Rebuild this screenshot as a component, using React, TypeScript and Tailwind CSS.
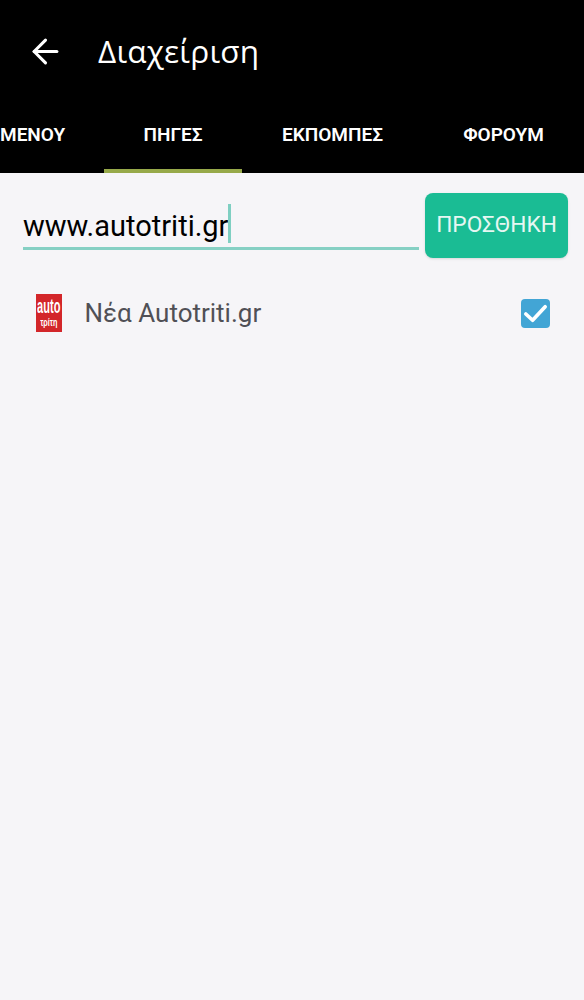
import { ArrowLeft } from "lucide-react";

const roboto = "font-['Roboto','Noto_Sans',sans-serif]";

function Tab({ label, active, className }: { label: string; active?: boolean; className: string }) {
  return (
    <div className={`relative flex h-full items-center pb-[8px] text-[19px] font-semibold leading-none text-white ${className}`}>
      {label}
      {active && <div className="absolute bottom-0 left-0 right-0 h-[4px] bg-[#97a94a]" />}
    </div>
  );
}

function Logo() {
  return (
    <div className="flex h-[38px] w-[26px] flex-col items-center overflow-hidden bg-[#d3262a] font-['Liberation_Sans',sans-serif] font-bold leading-none text-white">
      <span className="mt-[3px] h-[19px] origin-top scale-x-[0.85] scale-y-[1.55] text-[13px] leading-[12px]">auto</span>
      <span className="mt-[2px] h-[11px] origin-top scale-x-[0.8] scale-y-[1.2] text-[9px] leading-[9px]">τρίτη</span>
    </div>
  );
}

export default function App() {
  return (
    <div className={`flex h-[1000px] w-[584px] flex-col overflow-hidden bg-[#f6f5f8] ${roboto}`}>
      <header className="flex h-[104px] items-center bg-black pb-[2px] pl-[26px] text-white">
        <ArrowLeft size={39} strokeWidth={1.9} />
        <h1 className="ml-[33px] font-['Open_Sans',sans-serif] text-[31.5px] font-medium leading-none tracking-[0.2px]">
          Διαχείριση
        </h1>
      </header>
      <nav className="flex h-[69px] bg-black">
        <Tab label="ΜΕΝΟΥ" className="w-[104px]" />
        <Tab label="ΠΗΓΕΣ" active className="w-[138px] justify-center" />
        <Tab label="ΕΚΠΟΜΠΕΣ" className="w-[181px] justify-center" />
        <Tab label="ΦΟΡΟΥΜ" className="w-[161px] justify-center" />
      </nav>
      <div className="flex items-start pl-[23px] pr-[16px] pt-[20px]">
        <div className="relative mr-[6px] flex h-[57px] flex-1 items-center border-b-[3px] border-[#86d0c4] pt-[12px] text-[29px] leading-none text-black">
          <span>www.autotriti.gr</span>
          <span className="ml-[0px] mt-[-6px] h-[39px] w-[3px] bg-[#7fcfc2]" />
        </div>
        <button className="flex h-[65px] w-[143px] items-center justify-center rounded-[8px] bg-[#1abc94] text-[22.7px] leading-none text-[#e6f7f2] shadow-sm">
          ΠΡΟΣΘΗΚΗ
        </button>
      </div>
      <div className="flex items-center pl-[36px] pr-[34px] pt-[36px]">
        <Logo />
        <span className="ml-[22.5px] flex-1 text-[26px] leading-none text-[#505056]">Νέα Autotriti.gr</span>
        <div className="flex h-[29px] w-[29px] items-center justify-center rounded-[4px] bg-[#42a5d5]">
          <svg viewBox="0 0 30 30" className="h-[29px] w-[29px]" fill="none" stroke="#fff" strokeWidth="3.8" strokeLinecap="round" strokeLinejoin="round">
            <path d="M5 15.5 L12 22 L25 8" />
          </svg>
        </div>
      </div>
    </div>
  );
}
